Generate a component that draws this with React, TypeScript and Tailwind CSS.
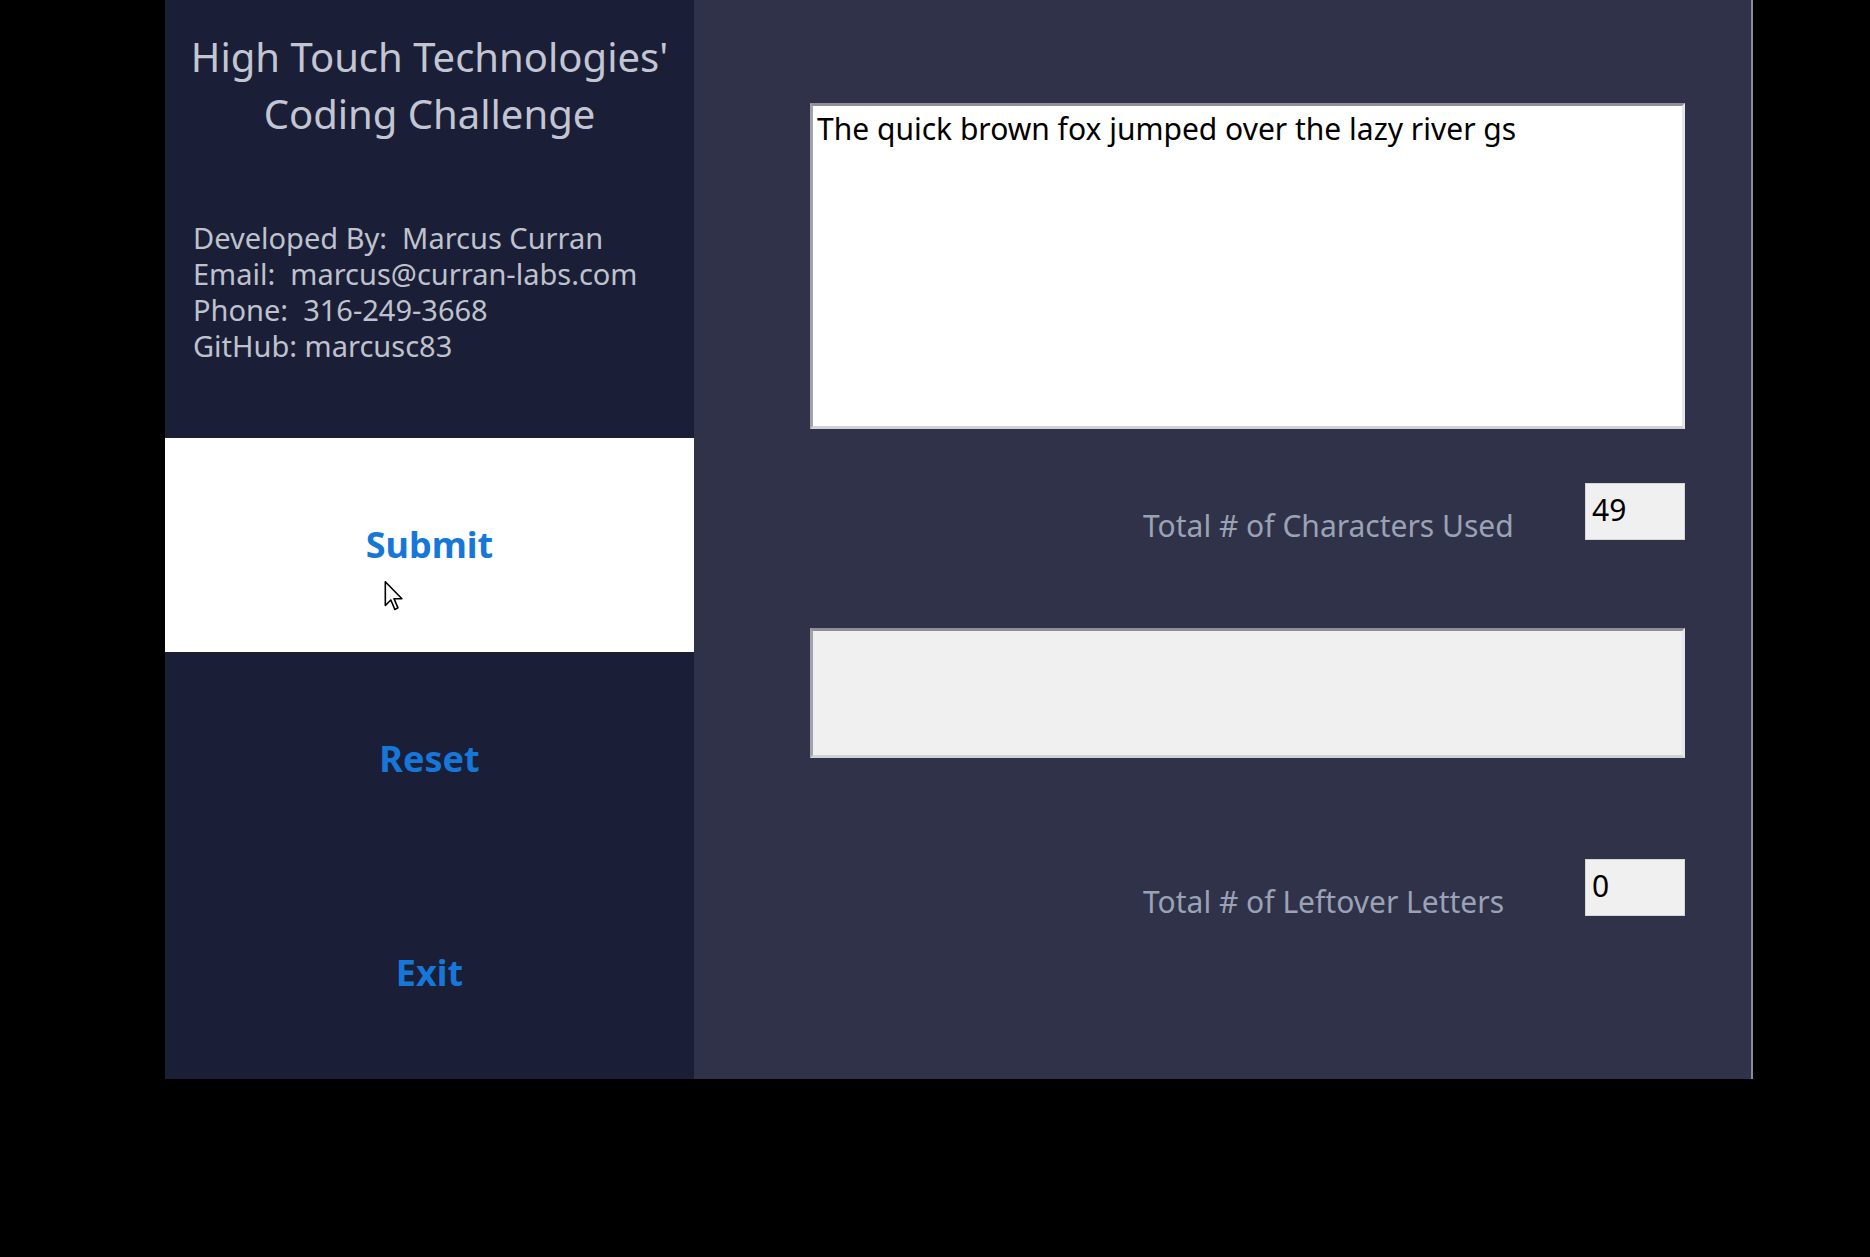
import React from 'react';

const Cursor: React.FC = () => (
    <svg className="absolute left-[219px] top-[143px]" width="20" height="30" viewBox="0 0 12 19">
        <path d="M0.5 0.5 L0.5 15.5 L4 12 L6.5 18 L8.5 17 L6 11.2 L11 11.2 Z" fill="#ffffff" stroke="#000000" strokeWidth="1" strokeLinejoin="round" />
    </svg>
);

const App: React.FC = () => {
    return (
        <div className="flex w-full h-[1257px] bg-black pl-[165px]" style={{ fontFamily: '"Noto Sans", "Open Sans", sans-serif' }}>

            {/* left side panel */}
            <div className="flex flex-col w-[529px] h-[1079px] bg-[#1a1e37]">
                <div className="flex flex-col items-center pt-[28px] text-[40px] leading-[57px] text-[#c3c6d2]">
                    <span>High Touch Technologies'</span>
                    <span>Coding Challenge</span>
                </div>

                <div className="flex flex-col pl-[28px] pt-[78px] text-[29px] leading-[36px] text-[#bfc2cd]">
                    <span className="whitespace-pre">Developed By:  Marcus Curran</span>
                    <span className="whitespace-pre">Email:  marcus@curran-labs.com</span>
                    <span className="whitespace-pre">Phone:  316-249-3668</span>
                    <span className="whitespace-pre">GitHub: marcusc83</span>
                </div>

                <div className="flex flex-col mt-[74px]">
                    <button className="relative flex items-center justify-center h-[214px] bg-white text-[36px] font-bold text-[#1677d8]">
                        Submit
                        <Cursor />
                    </button>
                    <button className="flex items-center justify-center h-[214px] text-[36px] font-bold text-[#1677d8]">
                        Reset
                    </button>
                    <button className="flex items-center justify-center h-[214px] text-[36px] font-bold text-[#1677d8]">
                        Exit
                    </button>
                </div>
            </div>

            {/* right work area */}
            <div className="flex flex-col w-[1059px] h-[1079px] bg-[#2f3248] border-r-2 border-r-[#8a8d99] pl-[116px] pr-[66px] pt-[103px]">
                <div className="h-[326px] w-[875px] bg-white border-[3px] border-t-[#8f9096] border-l-[#a3a4aa] border-b-[#d0d1d6] border-r-[#e6e6ea] px-[4px] pt-[6px] text-[30px] leading-[34px] text-black">
                    The quick brown fox jumped over the lazy river gs
                </div>

                <div className="flex items-start mt-[54px] pl-[333px]">
                    <span className="flex-1 text-[30px] leading-[41px] text-[#9ba2b6] pt-[22px]">Total # of Characters Used</span>
                    <div className="w-[100px] h-[57px] bg-[#f0f0f0] border border-[#d5d5d8] px-[6px] pt-[9px] text-[30px] leading-[34px] text-black">49</div>
                </div>

                <div className="h-[130px] w-[875px] mt-[82px] bg-[#f0f0f0] border-[3px] border-t-[#8f9096] border-l-[#a3a4aa] border-b-[#d0d1d6] border-r-[#e6e6ea]"></div>

                <div className="flex items-start mt-[101px] pl-[333px]">
                    <span className="flex-1 text-[30px] leading-[41px] text-[#9ba2b6] pt-[22px]">Total # of Leftover Letters</span>
                    <div className="w-[100px] h-[57px] bg-[#f0f0f0] border border-[#d5d5d8] px-[6px] pt-[9px] text-[30px] leading-[34px] text-black">0</div>
                </div>
            </div>
        </div>
    );
}

export default App;
